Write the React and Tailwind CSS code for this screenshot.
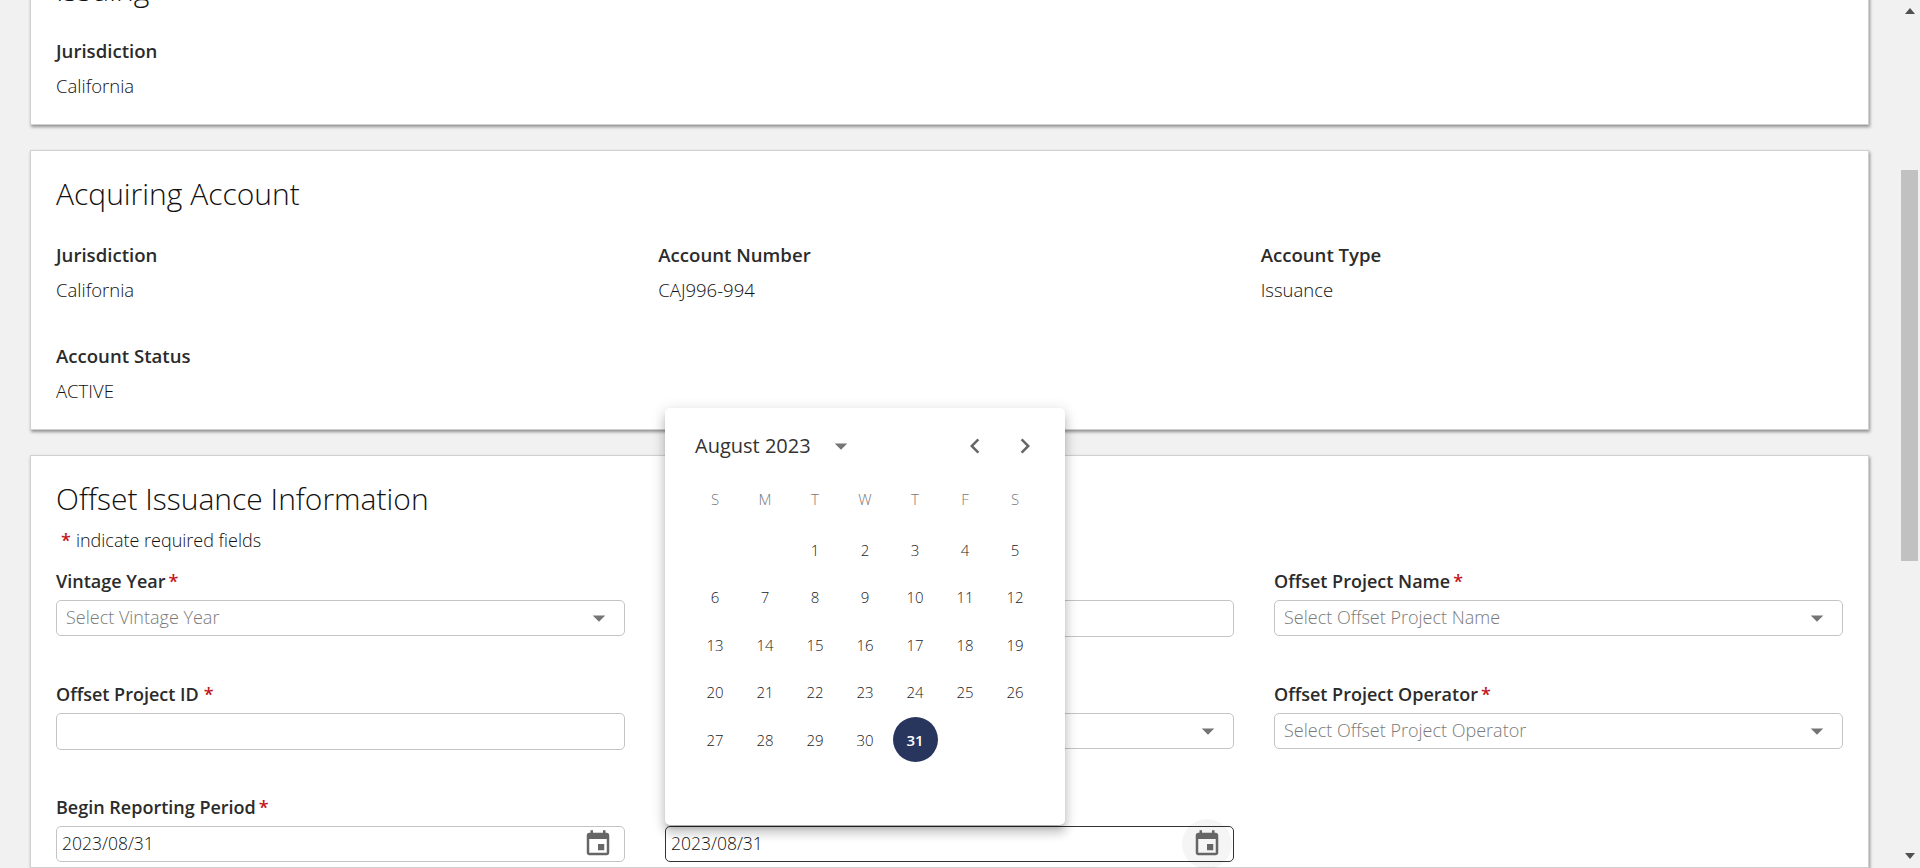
import React from "react";

const MONTH_DAYS = [null, null, 1, 2, 3, 4, 5, 6, 7, 8, 9, 10, 11, 12, 13, 14, 15, 16, 17, 18, 19, 20, 21, 22, 23, 24, 25, 26, 27, 28, 29, 30, 31];
const WEEK_DAYS = ["S", "M", "T", "W", "T", "F", "S"];

const CARD = "bg-white border border-[#d0d0d0] shadow-[1px_2px_3px_rgba(0,0,0,0.4)] px-[25px]";

const Icon = ({ d, size = 30, className = "" }) => (
  <svg width={size} height={size} viewBox="0 0 24 24" fill="currentColor" className={className}>
    <path d={d} />
  </svg>
);

const ARROW_DOWN = "M7 10l5 5 5-5z";
const CHEVRON_LEFT = "M15.41 7.41 14 6l-6 6 6 6 1.41-1.41L10.83 12z";
const CHEVRON_RIGHT = "M10 6 8.59 7.41 13.17 12l-4.58 4.59L10 18l6-6z";
const EVENT = "M17 12h-5v5h5v-5zM16 1v2H8V1H6v2H5c-1.11 0-1.99.9-1.99 2L3 19c0 1.1.89 2 2 2h14c1.1 0 2-.9 2-2V5c0-1.1-.9-2-2-2h-1V1h-2zm3 18H5V8h14v11z";

const Detail = ({ label, value }) => (
  <div className="h-[101px]">
    <div className="h-[22px] text-[18.6px] leading-[20px] font-semibold text-[#2b2b2b]">{label}</div>
    <div className="mt-[13px] h-[22px] text-[18.5px] leading-[20px] font-light text-[#111]">{value}</div>
  </div>
);

const Label = ({ text, spaced }) => (
  <div className="h-[22px] text-lg leading-[20px] font-semibold text-[#2b2b2b] whitespace-nowrap">
    {text}
    <span className={`text-[#c4161c] ${spaced ? "ml-[5px]" : "ml-[3px]"}`}>*</span>
  </div>
);

const SelectField = ({ label, placeholder, spaced }) => (
  <div>
    {label ? <Label text={label} spaced={spaced} /> : <div className="h-[22px]" />}
    <div className="mt-[7px] h-9 flex items-center justify-between border border-[#c4c4c4] rounded-[5px] pl-[9px] pr-[10px]">
      <span className="text-lg font-light text-[#7a7a7a] mb-[2px]">{placeholder}</span>
      <Icon d={ARROW_DOWN} className="text-[#757575]" />
    </div>
  </div>
);

const TextField = ({ label, spaced }) => (
  <div>
    {label ? <Label text={label} spaced={spaced} /> : <div className="h-[22px]" />}
    <div className="mt-[7px] h-[37px] border border-[#c4c4c4] rounded-[5px]" />
  </div>
);

const DateField = ({ label, focused }) => (
  <div>
    {label ? <Label text={label} /> : <div className="h-[22px]" />}
    <div className={`relative mt-[7px] h-9 flex items-center justify-between pl-[5px] pr-[11px] rounded-[5px] border ${focused ? "border-[#333]" : "border-[#c4c4c4]"}`}>
      <span className="text-[17.5px] font-light text-[#111] mb-[2px]">2023/08/31</span>
      {focused && <span className="absolute right-[1px] top-[-8px] w-[50px] h-[50px] rounded-full bg-black/[0.04]" />}
      <Icon d={EVENT} className="relative text-[#666]" />
    </div>
  </div>
);

const DatePopup = () => (
  <div className="absolute left-[665px] top-[408px] w-[400px] h-[417px] bg-white rounded-[5px] shadow-[0_5px_5px_-3px_rgba(0,0,0,0.2),0_8px_10px_1px_rgba(0,0,0,0.14),0_3px_14px_2px_rgba(0,0,0,0.12)] px-[25px]">
    <div className="h-[39px] mt-[18px] flex items-center">
      <span className="ml-[5px] text-xl text-[#333]">August 2023</span>
      <Icon d={ARROW_DOWN} className="ml-[15px] text-[#757575]" />
      <Icon d={CHEVRON_LEFT} className="ml-auto mr-5 text-[#666]" />
      <Icon d={CHEVRON_RIGHT} className="text-[#666]" />
    </div>
    <div className="mt-[11px] grid grid-cols-7 h-[50px] items-start">
      {WEEK_DAYS.map((d, i) => (
        <span key={i} className="h-[46px] flex items-center justify-center text-[15px] font-light text-[#777]">{d}</span>
      ))}
    </div>
    <div className="grid grid-cols-7 auto-rows-[47.5px]">
      {MONTH_DAYS.map((d, i) => (
        <div key={i} className="flex items-center justify-center">
          {d === 31 ? (
            <span className="w-[45px] h-[45px] rounded-full bg-[#28365e] text-white text-[15px] font-semibold flex items-center justify-center">31</span>
          ) : (
            <span className="text-[15px] font-light text-[#222]">{d}</span>
          )}
        </div>
      ))}
    </div>
  </div>
);

export default function App() {
  return (
    <div className="relative h-screen overflow-hidden flex bg-[#f1f1f1] [font-family:'Open_Sans',sans-serif]">
      <main className="flex-1 min-w-0 pl-[30px] pr-[32px] mt-[-54px] flex flex-col gap-[25px]">
        <section className={`${CARD} h-[179px] pt-[25px]`}>
          <h2 className="h-[38px] text-[30px] leading-[36px] font-light text-[#111]">Issuing</h2>
          <div className="mt-[31px]">
            <Detail label="Jurisdiction" value="California" />
          </div>
        </section>

        <section className={`${CARD} h-[280px] pt-[25px]`}>
          <h2 className="h-[38px] text-[30px] leading-[36px] font-light text-[#111]">Acquiring Account</h2>
          <div className="mt-[31px] w-[1807px] grid grid-cols-3">
            <Detail label="Jurisdiction" value="California" />
            <Detail label="Account Number" value="CAJ996-994" />
            <Detail label="Account Type" value="Issuance" />
            <Detail label="Account Status" value="ACTIVE" />
          </div>
        </section>

        <section className={`${CARD} flex-1 pt-[24px]`}>
          <h2 className="h-[38px] text-[30px] leading-[38px] font-light text-[#111]">Offset Issuance Information</h2>
          <p className="mt-[11px] ml-[5px] text-lg leading-[22px] font-light text-[#111]">
            <span className="text-[#c4161c] font-semibold mr-[5px]">*</span>indicate required fields
          </p>
          <div className="mt-5 grid grid-cols-3 gap-x-10 gap-y-[47px] items-start">
            <SelectField label="Vintage Year" placeholder="Select Vintage Year" />
            <TextField />
            <SelectField label="Offset Project Name" placeholder="Select Offset Project Name" />
            <TextField label="Offset Project ID" spaced />
            <SelectField />
            <SelectField label="Offset Project Operator" placeholder="Select Offset Project Operator" />
            <DateField label="Begin Reporting Period" />
            <DateField focused />
          </div>
        </section>
      </main>

      <aside className="w-[19px] pr-[2px] relative">
        <div className="mx-auto mt-[8px] w-0 h-0 border-x-[5px] border-x-transparent border-b-[6px] border-b-[#505050]" />
        <div className="mt-[156px] h-[391px] bg-[#c1c1c1]" />
        <div className="mx-auto mt-[292px] w-0 h-0 border-x-[5px] border-x-transparent border-t-[6px] border-t-[#505050]" />
      </aside>

      <DatePopup />
    </div>
  );
}
